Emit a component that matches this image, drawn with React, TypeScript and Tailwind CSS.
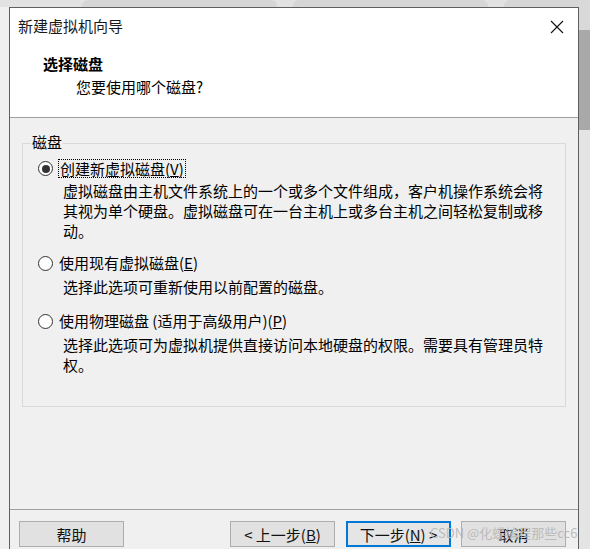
import React from "react";

const font = { fontFamily: '"Noto Sans CJK SC", "Noto Sans", sans-serif' };

function Radio({ checked }: { checked?: boolean }) {
  return (
    <span className="flex h-[15px] w-[15px] shrink-0 items-center justify-center rounded-full border border-[#333333] bg-white">
      {checked && <span className="h-[8px] w-[8px] rounded-full bg-[#333333]" />}
    </span>
  );
}

function Btn({ children, primary, className = "" }: { children: React.ReactNode; primary?: boolean; className?: string }) {
  return (
    <div
      className={
        "flex h-[26px] w-[105px] items-center justify-center text-[15px] leading-none text-[#111] " +
        (primary ? "border-2 border-[#0078d7] bg-[#e5e5e5] " : "border border-[#adadad] bg-[#e1e1e1] ") +
        className
      }
    >
      {children}
    </div>
  );
}

export default function App() {
  return (
    <div className="relative flex h-[549px] w-[590px] overflow-hidden bg-[#f0f0f0]" style={font}>
      {/* top background strip */}
      <div className="absolute left-0 top-0 flex h-[7px] w-[590px] gap-[16px] bg-[#e2e2e2] pl-[82px]">
        <div className="h-[7px] w-[195px] rounded-t-[6px] bg-[#d6d6d6]" />
        <div className="h-[7px] w-[195px] rounded-t-[6px] bg-[#d6d6d6]" />
        <div className="h-[7px] w-[80px] rounded-t-[6px] bg-[#d6d6d6]" />
      </div>
      {/* right background strip */}
      <div className="absolute right-0 top-0 flex h-[549px] w-[11px] flex-col bg-[#e4e4e4]">
        <div className="h-[30px] bg-[#d9d9d9]" />
        <div className="h-[100px] bg-[#a9a9a9]" />
      </div>

      <div className="w-[9px] shrink-0" />
      <div className="z-10 mt-[7px] flex w-[570px] flex-col border-l border-r border-t border-[#5f5f5f] bg-[#f0f0f0] text-[#000]">
        {/* header */}
        <div className="flex h-[110px] flex-col border-b border-[#a0a0a0] bg-white">
          <div className="flex items-start justify-between pl-[8px] pr-[14px] pt-[8px]">
            <div className="text-[15px] leading-[20px] text-[#1a1a1a]">新建虚拟机向导</div>
            <svg width="14" height="14" viewBox="0 0 14 14" className="mt-[4px]">
              <path d="M1 1 L13 13 M13 1 L1 13" stroke="#111" strokeWidth="1.1" />
            </svg>
          </div>
          <div className="mt-[18px] pl-[33px] text-[15px] font-bold leading-[20px]">选择磁盘</div>
          <div className="mt-[3px] pl-[66px] text-[15px] leading-[20px]">您要使用哪个磁盘?</div>
        </div>

        {/* body */}
        <div className="flex h-[391px] flex-col">
          <div className="relative mx-[12px] mt-[25px] h-[264px] border border-[#d9d9d9]">
            <div className="absolute left-[8px] top-[-12px] bg-[#f0f0f0] px-[1px] text-[15px] leading-[20px]">磁盘</div>
            <div className="flex flex-col pl-[15px] pt-[15px] text-[15px] leading-[20px]">
              <div className="flex items-center">
                <Radio checked />
                <span className="ml-[5px] border border-dotted border-[#000] px-[1px] leading-[17px]">
                  创建新虚拟磁盘(<span className="underline">V</span>)
                </span>
              </div>
              <div className="ml-[25px] mt-[3px] w-[485px]">
                虚拟磁盘由主机文件系统上的一个或多个文件组成，客户机操作系统会将其视为单个硬盘。虚拟磁盘可在一台主机上或多台主机之间轻松复制或移动。
              </div>

              <div className="mt-[12px] flex items-center">
                <Radio />
                <span className="ml-[6px]">
                  使用现有虚拟磁盘(<span className="underline">E</span>)
                </span>
              </div>
              <div className="ml-[25px] mt-[4px]">选择此选项可重新使用以前配置的磁盘。</div>

              <div className="mt-[14px] flex items-center">
                <Radio />
                <span className="ml-[6px]">
                  使用物理磁盘 (适用于高级用户)(<span className="underline">P</span>)
                </span>
              </div>
              <div className="ml-[25px] mt-[4px] w-[485px]">
                选择此选项可为虚拟机提供直接访问本地硬盘的权限。需要具有管理员特权。
              </div>
            </div>
          </div>
        </div>

        {/* footer */}
        <div className="flex border-t border-[#a0a0a0] pl-[9px] pt-[11px]">
          <Btn>帮助</Btn>
          <div className="flex-1" />
          <Btn>&lt; 上一步(<span className="underline">B</span>)</Btn>
          <Btn primary className="ml-[11px]">
            下一步(<span className="underline">N</span>) &gt;
          </Btn>
          <Btn className="ml-[10px] mr-[12px]">取消</Btn>
        </div>
      </div>

      {/* watermark */}
      <div className="absolute left-[430px] top-[524px] z-20 text-[13px] leading-[17px] text-[#b8b8b8] opacity-90">
        CSDN @化蝶编程那些cc6
      </div>
    </div>
  );
}
